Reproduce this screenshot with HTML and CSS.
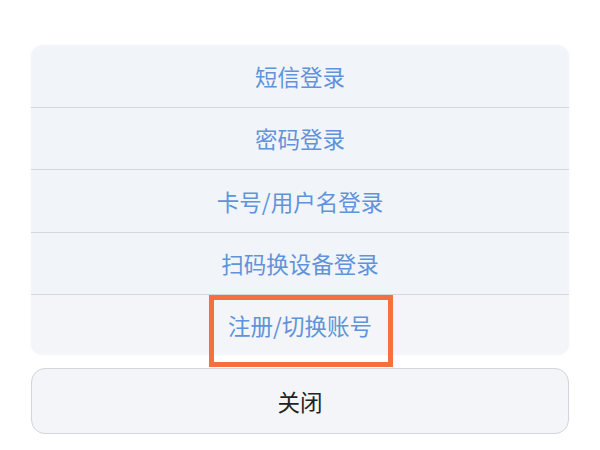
FILE: index.html
```html
<!DOCTYPE html>
<html lang="zh-CN">
<head>
<meta charset="utf-8">
<link rel="stylesheet" href="styles.css">
</head>
<body>
<div class="sheet">
  <div class="menu">
    <div class="row">短信登录</div>
    <div class="row">密码登录</div>
    <div class="row">卡号/用户名登录</div>
    <div class="row">扫码换设备登录</div>
    <div class="row last">注册/切换账号</div>
  </div>
  <div class="close">关闭</div>
  <div class="highlight"></div>
</div>
</body>
</html>
```
FILE: styles.css
```css
html, body {
  margin: 0;
  padding: 0;
  background: #ffffff;
}
body {
  width: 600px;
  height: 450px;
  overflow: hidden;
  font-family: "Noto Sans CJK SC", "Noto Sans", sans-serif;
}
.sheet {
  position: relative;
  padding: 45px 31px 0 31px;
  display: flex;
  flex-direction: column;
}
.menu {
  background: #f1f5fa;
  border-radius: 12px;
  overflow: hidden;
  display: flex;
  flex-direction: column;
  box-shadow: 0 0 3px rgba(0, 0, 0, 0.03);
}
.row {
  height: 61.5px;
  display: flex;
  align-items: center;
  justify-content: center;
  font-size: 22.5px;
  color: #6093da;
  border-bottom: 1.5px solid #d4d7db;
}
.row.last {
  height: 60px;
  border-bottom: none;
  background: #f3f5f8;
}
.close {
  margin-top: 13px;
  height: 64px;
  border: 1.5px solid #d2d5d9;
  border-radius: 14px;
  background: #f3f5f8;
  display: flex;
  align-items: center;
  justify-content: center;
  font-size: 22.5px;
  color: #222222;
}
.highlight {
  position: absolute;
  left: 209px;
  top: 295px;
  width: 174px;
  height: 62px;
  border: 5px solid #f5703f;
}
```
